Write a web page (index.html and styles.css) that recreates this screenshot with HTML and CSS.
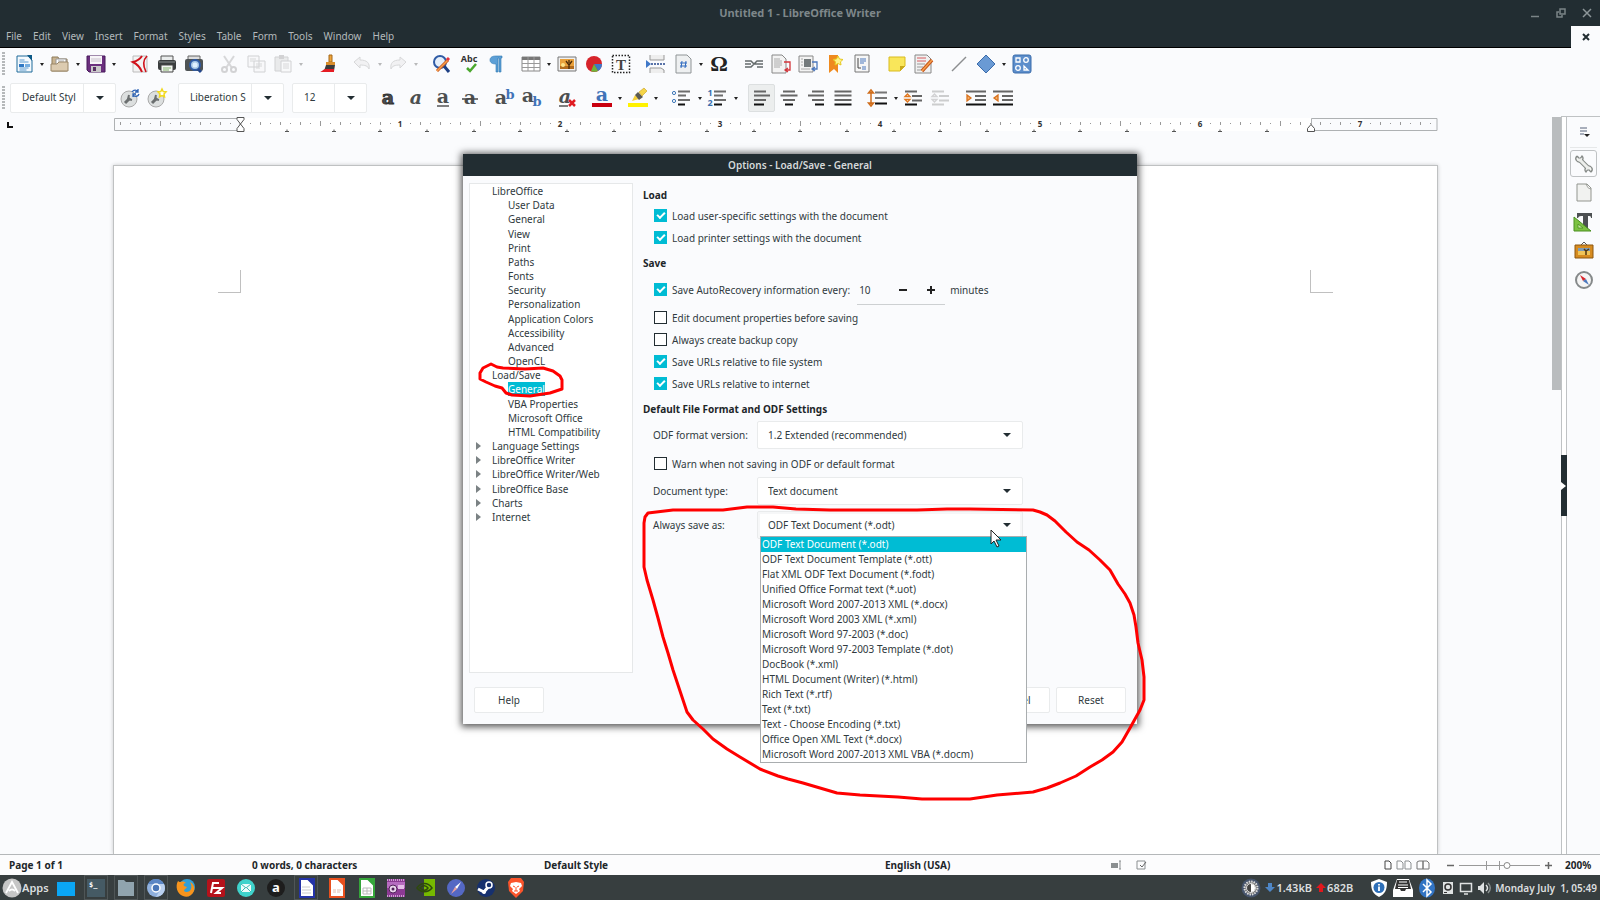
FILE: index.html
```html
<!DOCTYPE html>
<html lang="en">
<head>
  <meta charset="UTF-8" />
  <meta name="viewport" content="width=device-width, initial-scale=1.0"/>
  <title>Untitled 1 - LibreOffice Writer</title>
  <link rel="stylesheet" href="styles.css">
</head>
<body>
  <header class="titlebar">
    <h1>Untitled 1 - LibreOffice Writer</h1>
    <div class="window-buttons">
      <button aria-label="Minimize"><svg viewBox="0 0 10 10"><path d="M1 8.500h8" stroke="#7b8487" stroke-width="1.500"/></svg></button>
      <button aria-label="Restore"><svg viewBox="0 0 10 10"><path d="M4 1h5v5H4zM3 4H1v5h5V7" fill="none" stroke="#7b8487" stroke-width="1.500"/></svg></button>
      <button aria-label="Close"><svg viewBox="0 0 10 10"><path d="M1 1l8 8M9 1l-8 8" stroke="#8d9699" stroke-width="1.500"/></svg></button>
    </div>
  </header>

  <nav class="menubar">
    <a href="#">File</a>
    <a href="#">Edit</a>
    <a href="#">View</a>
    <a href="#">Insert</a>
    <a href="#">Format</a>
    <a href="#">Styles</a>
    <a href="#">Table</a>
    <a href="#">Form</a>
    <a href="#">Tools</a>
    <a href="#">Window</a>
    <a href="#">Help</a>
    <button class="close-doc" aria-label="Close document"><svg viewBox="0 0 8 8"><path d="M1 1l6 6M7 1l-6 6" stroke="#222d32" stroke-width="2"/></svg></button>
  </nav>

  <!-- standard toolbar -->
  <div class="toolbar standard">
    <span class="grip"></span>
    <div class="group">
      <button class="tool" aria-label="New"><svg viewBox="0 0 20 20"><path d="M3 2h11l4 4v12H3z" fill="#f4f9fd" stroke="#1f6a9a"/><path d="M13 1h5v6z" fill="#0e5a87"/><path d="M5.500 6h5M5.500 8h9M5.500 14h9M5.500 16h7" stroke="#5a9bd0"/><path d="M5 10h5v3H5z" fill="#2f78c4"/><path d="M11 10h5v3h-5z" fill="#76aee0"/></svg></button>
      <button class="drop" aria-label="New options"></button>
      <button class="tool" aria-label="Open"><svg viewBox="0 0 20 20"><path d="M2 17V3h6l1 2h8v12z" fill="#c9b491" stroke="#8d7a5b"/><path d="M6 5h10v7H6z" fill="#fff" stroke="#999"/><path d="M8 7h6M8 9h6" stroke="#aaa"/><path d="M1 17V10h6l2-2h9v9z" fill="#dccbb0" stroke="#9a8768"/></svg></button>
      <button class="drop" aria-label="Open options"></button>
      <button class="tool" aria-label="Save"><svg viewBox="0 0 20 20"><path d="M1 2h18v16H3l-2-2z" fill="#6b2f7e" stroke="#46195a"/><path d="M4 2h12v8H4z" fill="#f7f5f8"/><path d="M5 5h10M5 7h10" stroke="#c8c0cc"/><path d="M5 12h10v6H5z" fill="#c9c9c9"/><path d="M7 13h3v4H7z" fill="#573063"/></svg></button>
      <button class="drop" aria-label="Save options"></button>
    </div>
    <div class="group">
      <button class="tool" aria-label="Export as PDF"><svg viewBox="0 0 20 20"><path d="M3 2h14v16H3z" fill="#f3f3f3" stroke="#bbb"/><path d="M12 2c-2 3-5 5-9 6 4 2 7 5 9 10" fill="none" stroke="#d0121b" stroke-width="2"/><path d="M17 2c-4 4-4 10-1 16" fill="none" stroke="#d0121b" stroke-width="1.600"/></svg></button>
      <button class="tool" aria-label="Print"><svg viewBox="0 0 20 20"><path d="M4 2h12v6H4z" fill="#e9ecec" stroke="#555"/><rect x="1" y="6" width="18" height="10" rx="2" fill="#3b3e3f"/><path d="M2 8h16" stroke="#8b9091"/><path d="M4 11h12v7H4z" fill="#f4f6f3" stroke="#444"/><path d="M6 14h8M6 16h6" stroke="#83b26d"/></svg></button>
      <button class="tool" aria-label="Print Preview"><svg viewBox="0 0 20 20"><path d="M4 2h12v5H4z" fill="#ddd" stroke="#666"/><rect x="1" y="5" width="18" height="12" rx="2" fill="#4e5355"/><circle cx="11" cy="11" r="5" fill="#a9c8e6" stroke="#2f5ba5" stroke-width="2"/><circle cx="11" cy="11" r="2.500" fill="#dff0ff"/><path d="M14 15l3 3" stroke="#24478c" stroke-width="3"/></svg></button>
    </div>
    <div class="group">
      <button class="tool off" aria-label="Cut" disabled><svg viewBox="0 0 20 20"><path d="M5 2l8 12M15 2L7 14" stroke="#888" stroke-width="2"/><circle cx="5.500" cy="15.500" r="2.500" fill="none" stroke="#777" stroke-width="2"/><circle cx="14.500" cy="15.500" r="2.500" fill="none" stroke="#777" stroke-width="2"/></svg></button>
      <button class="tool off" aria-label="Copy" disabled><svg viewBox="0 0 20 20"><path d="M2 2h11v11H2zM8 7h11v11H8z" fill="#f4f4f4" stroke="#777"/><path d="M4 5h6M4 7h4M10 10h6M10 12h6M10 14h4" stroke="#888"/></svg></button>
      <button class="tool off" aria-label="Paste" disabled><svg viewBox="0 0 20 20"><path d="M2 3h13v14H2z" fill="#c5c5c5" stroke="#777"/><path d="M6 1h5v4H6z" fill="#777"/><path d="M8 7h10v11H8z" fill="#f5f5f5" stroke="#777"/><path d="M10 10h6M10 12h6M10 14h6" stroke="#888"/></svg></button>
      <button class="drop off" aria-label="Paste options" disabled></button>
    </div>
    <div class="group">
      <button class="tool" aria-label="Clone Formatting"><svg viewBox="0 0 20 20"><path d="M12 1h3v7h-3z" fill="#f0a53b" stroke="#a4681b"/><path d="M9 8h9v3H9z" fill="#d98d2b"/><path d="M9 11h9l-1 6H7z" fill="#3c3c3c"/><path d="M2 18c3 0 3-2 6-3h9v3z" fill="#e51c23"/></svg></button>
    </div>
    <div class="group">
      <button class="tool off" aria-label="Undo" disabled><svg viewBox="0 0 20 20"><path d="M2 8l6-5v3c7 0 10 3 9 9-1-3-4-4-9-4v3z" fill="#ddd" stroke="#888"/></svg></button>
      <button class="drop off" aria-label="Undo options" disabled></button>
      <button class="tool off" aria-label="Redo" disabled><svg viewBox="0 0 20 20"><path d="M18 8l-6-5v3c-7 0-10 3-9 9 1-3 4-4 9-4v3z" fill="#ddd" stroke="#888"/></svg></button>
      <button class="drop off" aria-label="Redo options" disabled></button>
    </div>
    <div class="group">
      <button class="tool" aria-label="Find and Replace"><svg viewBox="0 0 20 20"><circle cx="8" cy="8" r="6" fill="#e4eefa" stroke="#2f5ba5" stroke-width="2"/><path d="M12 12l5 6" stroke="#1d3f84" stroke-width="3"/><path d="M5 17L16 6" stroke="#c6551c" stroke-width="3"/><path d="M5 17L16 6" stroke="#f7a04c" stroke-width="1.500"/><path d="M15 6l2-2" stroke="#e6323c" stroke-width="3"/></svg></button>
      <button class="tool" aria-label="Spelling"><svg viewBox="0 0 20 20"><text x="10" y="8" class="abc" text-anchor="middle">Abc</text><path d="M8 14l3 3 6-7" fill="none" stroke="#4ba82e" stroke-width="2.500"/></svg></button>
      <button class="tool" aria-label="Formatting Marks"><svg viewBox="0 0 20 20"><path d="M16 2v2h-1v14h-2V4h-1v14h-2v-8C6 10 4 8.500 4 6s2-4 6-4z" fill="#5c9fd6" stroke="#2f78b4" stroke-width=".6"/></svg></button>
    </div>
    <div class="group">
      <button class="tool" aria-label="Insert Table"><svg viewBox="0 0 20 20"><path d="M1 3h18v14H1z" fill="#fff" stroke="#888"/><path d="M1 3h18v3H1z" fill="#777"/><path d="M1 9.500h18M1 13.500h18M7 3v14M13 3v14" stroke="#999"/></svg></button>
      <button class="drop" aria-label="Table options"></button>
      <button class="tool" aria-label="Insert Image"><svg viewBox="0 0 20 20"><path d="M1 3h18v14H1z" fill="#f0f0f0" stroke="#777"/><path d="M3 5h14v10H3z" fill="#e9a13b"/><path d="M3 12h14v3H3z" fill="#b36c1c"/><circle cx="6" cy="11" r="2" fill="#fde48a"/><path d="M12 15v-4L9 7M12 11l3-4M12 9V6" stroke="#4a2a08" fill="none" stroke-width="1.300"/></svg></button>
      <button class="tool" aria-label="Insert Chart"><svg viewBox="0 0 20 20"><circle cx="10" cy="10" r="8" fill="#d6242b"/><path d="M10 10h8a8 8 0 0 1-4 7z" fill="#3f78c8"/><path d="M10 10l4 7a8 8 0 0 1-7 0z" fill="#6fb53b"/></svg></button>
      <button class="tool" aria-label="Insert Text Box"><svg viewBox="0 0 20 20"><path d="M1.500 1.500h17v17h-17z" fill="none" stroke="#222" stroke-width="1.500" stroke-dasharray="1.500 1.500"/><text x="10" y="15.500" class="glyph-t" text-anchor="middle">T</text></svg></button>
    </div>
    <div class="group">
      <button class="tool" aria-label="Page Break"><svg viewBox="0 0 20 20"><path d="M4 1v5h14V1M4 19v-5h11l3 2v3" fill="#eee" stroke="#999"/><path d="M5 10h15" stroke="#24478c" stroke-width="1.500" stroke-dasharray="2 1"/><path d="M0 6l5 4-5 4z" fill="#3f78c8"/></svg></button>
      <button class="tool" aria-label="Insert Field"><svg viewBox="0 0 20 20"><path d="M3 1h11l4 4v14H3z" fill="#eef0f1" stroke="#8f9496"/><path d="M9 7L8 14M13 7l-1 7M7 9h7M7 12h7" stroke="#2f6ac0"/></svg></button>
      <button class="drop" aria-label="Field options"></button>
      <button class="tool" aria-label="Special Character"><svg viewBox="0 0 20 20"><text x="10" y="17" class="omega" text-anchor="middle">Ω</text></svg></button>
    </div>
    <div class="group">
      <button class="tool" aria-label="Hyperlink"><svg viewBox="0 0 20 20"><path d="M1 7h6l3 3h9M1 13h6l3-3 3-3h6M1 10h6M13 13h6" fill="none" stroke="#646b6c" stroke-width="1.500"/></svg></button>
      <button class="tool" aria-label="Footnote"><svg viewBox="0 0 20 20"><path d="M1 1h10l4 4v14H1z" fill="#f3f3f3" stroke="#888"/><path d="M3 5h6M3 7h8M3 9h8M3 11h8M3 13h6" stroke="#aaa"/><path d="M13 8h6v8h-4m2-2l-3 2 3 2" fill="none" stroke="#d3343a" stroke-width="1.300"/></svg></button>
      <button class="tool" aria-label="Endnote"><svg viewBox="0 0 20 20"><path d="M1 2h14v16H1z" fill="#f3f3f3" stroke="#888"/><path d="M6 5h7v8H6z" fill="#747a7c"/><path d="M3 5h2M3 8h2M3 11h2M3 15h9" stroke="#aaa"/><path d="M14 8h5v7h-4m2-2l-3 2 3 2" fill="none" stroke="#4c78bd" stroke-width="1.300"/></svg></button>
      <button class="tool" aria-label="Bookmark"><svg viewBox="0 0 20 20"><path d="M4 1h9v18l-4-4-5 4z" fill="#ef8a1e"/><path d="M13 2l1.500 3 3.500.5-2.500 2.300.5 3.200-3-1.500-3 1.500.5-3.200L8 5.500l3.500-.5z" fill="#fff38a" stroke="#e6c81e"/></svg></button>
      <button class="tool" aria-label="Cross-reference"><svg viewBox="0 0 20 20"><path d="M3 1h14v17H3z" fill="#f6f6f6" stroke="#777"/><path d="M8 5h6M8 7h6M8 9h4M10 13h4M10 15h4" stroke="#4c78bd"/><path d="M6 4v10h3" stroke="#444" fill="none"/></svg></button>
    </div>
    <div class="group">
      <button class="tool" aria-label="Comment"><svg viewBox="0 0 20 20"><path d="M2 3h16v9l-5 5H2z" fill="#f9e65a" stroke="#d9bb1e"/><path d="M18 12h-5v5z" fill="#c9a81b"/></svg></button>
      <button class="tool" aria-label="Track Changes"><svg viewBox="0 0 20 20"><path d="M1 1h12l4 4v14H1z" fill="#f1f1f1" stroke="#888"/><path d="M3 4h9M3 7h9" stroke="#d65a5e"/><path d="M3 10h8M3 13h6M3 16h8" stroke="#999"/><path d="M8 17L18 6" stroke="#c6551c" stroke-width="3.500"/><path d="M8 17L18 6" stroke="#f7a04c" stroke-width="1.500"/></svg></button>
    </div>
    <div class="group">
      <button class="tool" aria-label="Line"><svg viewBox="0 0 20 20"><path d="M3 17L17 3" stroke="#8b8e90" stroke-width="1.500"/></svg></button>
      <button class="tool" aria-label="Shapes"><svg viewBox="0 0 20 20"><path d="M10 1l9 9-9 9-9-9z" fill="#6a9ad4" stroke="#3b6cab"/></svg></button>
      <button class="drop" aria-label="Shape options"></button>
      <button class="tool" aria-label="Draw Functions"><svg viewBox="0 0 20 20"><rect x="1" y="1" width="18" height="18" rx="2" fill="#5d8ecb" stroke="#3b6cab"/><path d="M4 4h4v4H4zM12 16v-4l4 4z" fill="none" stroke="#fff" stroke-width="1.300"/><circle cx="14" cy="6" r="2.300" fill="none" stroke="#fff" stroke-width="1.300"/><circle cx="6" cy="14" r="2.300" fill="none" stroke="#fff" stroke-width="1.300"/></svg></button>
    </div>
  </div>

  <!-- formatting toolbar -->
  <div class="toolbar formatting">
    <span class="grip"></span>
    <div class="group">
      <div class="combo"><input type="text" value="Default Styl" aria-label="Paragraph style"><button aria-label="Show styles"></button></div>
      <button class="tool" aria-label="Update Style"><svg viewBox="0 0 20 20"><circle cx="9" cy="11" r="8" fill="#dcdfdf" stroke="#aaa"/><path d="M5 15l5-5" stroke="#6b6f70" stroke-width="3"/><path d="M9 7l-1 4 4 1" fill="none" stroke="#6b6f70" stroke-width="2"/><path d="M12 4c2-3 5-2 6 0M19 6c-1 3-4 3-6 1M18 1v3h-3M13 9V6h3" fill="none" stroke="#2f64b5" stroke-width="1.300"/></svg></button>
      <button class="tool" aria-label="New Style"><svg viewBox="0 0 20 20"><circle cx="9" cy="11" r="8" fill="#dcdfdf" stroke="#aaa"/><path d="M5 15l5-5" stroke="#6b6f70" stroke-width="3"/><path d="M9 7l-1 4 4 1" fill="none" stroke="#6b6f70" stroke-width="2"/><path d="M15 1l1.200 2.500 2.800.4-2 2 .5 3L15 7.600l-2.500 1.300.5-3-2-2 2.800-.4z" fill="#fff" stroke="#f1d81e" stroke-width="1.500"/></svg></button>
    </div>
    <div class="combo"><input type="text" value="Liberation S" aria-label="Font name"><button aria-label="Show fonts"></button></div>
    <div class="combo size"><input type="text" value="12" aria-label="Font size"><button aria-label="Show sizes"></button></div>
    <div class="group">
      <button class="tool" aria-label="Bold"><svg viewBox="0 0 20 20"><text x="9" y="16" class="letter heavy" text-anchor="middle">a</text></svg></button>
      <button class="tool" aria-label="Italic"><svg viewBox="0 0 20 20"><text x="10" y="16" class="letter slanted" text-anchor="middle">a</text></svg></button>
      <button class="tool" aria-label="Underline"><svg viewBox="0 0 20 20"><text x="10" y="15" class="letter" text-anchor="middle">a</text><path d="M4 18h12" stroke="#555" stroke-width="1.500"/></svg></button>
      <button class="tool" aria-label="Strikethrough"><svg viewBox="0 0 20 20"><text x="10" y="16" class="letter" text-anchor="middle">a</text><path d="M2 11h16" stroke="#444" stroke-width="1.500"/></svg></button>
    </div>
    <div class="group">
      <button class="tool" aria-label="Superscript"><svg viewBox="0 0 20 20"><text x="6" y="16" class="letter" text-anchor="middle">a</text><text x="15" y="11" class="letter small" text-anchor="middle">b</text></svg></button>
      <button class="tool" aria-label="Subscript"><svg viewBox="0 0 20 20"><text x="6" y="14" class="letter" text-anchor="middle">a</text><text x="15" y="18" class="letter small" text-anchor="middle">b</text></svg></button>
    </div>
    <div class="group">
      <button class="tool" aria-label="Clear Formatting"><svg viewBox="0 0 20 20"><text x="8" y="15" class="letter slanted" text-anchor="middle">a</text><path d="M2 18h9" stroke="#555" stroke-width="1.500"/><path d="M12 12l6 6M18 12l-6 6" stroke="#e01b22" stroke-width="2.500"/></svg></button>
    </div>
    <div class="group">
      <button class="tool" aria-label="Font Color"><svg viewBox="0 0 20 20"><text x="10" y="13" class="letter blue" text-anchor="middle">a</text><path d="M0 15h20v4H0z" fill="#c9000f"/></svg></button>
      <button class="drop" aria-label="Font color options"></button>
      <button class="tool" aria-label="Highlighting"><svg viewBox="0 0 20 20"><path d="M0 15h20v4H0z" fill="#fff200"/><path d="M4 13l3-6 4 4z" fill="#f3cf3a"/><path d="M7 7l3-3 5 5-4 3z" fill="#5a5a52"/><path d="M11 4l5-4 3 3-5 5z" fill="#f5d548" stroke="#c79d1e" stroke-width=".6"/></svg></button>
      <button class="drop" aria-label="Highlight options"></button>
    </div>
    <div class="group">
      <button class="tool" aria-label="Bullets"><svg viewBox="0 0 20 20"><circle cx="2" cy="5" r="1.600" fill="none" stroke="#3f78b8"/><circle cx="2" cy="13" r="1.600" fill="none" stroke="#3f78b8"/><path d="M6 3.500h12M6 7.500h8M6 12h12" stroke="#6c6c6c" stroke-width="2"/><path d="M6 16.500h7" stroke="#111" stroke-width="2"/></svg></button>
      <button class="drop" aria-label="Bullet options"></button>
      <button class="tool" aria-label="Numbering"><svg viewBox="0 0 20 20"><text x="2" y="8" class="num" text-anchor="middle">1</text><text x="2" y="18" class="num" text-anchor="middle">2</text><path d="M6 3.500h12M6 7.500h9M6 12h12" stroke="#6c6c6c" stroke-width="2"/><path d="M6 16.500h8" stroke="#111" stroke-width="2"/></svg></button>
      <button class="drop" aria-label="Numbering options"></button>
    </div>
    <div class="group">
      <button class="tool pressed" aria-label="Align Left"><svg viewBox="0 0 20 20"><path d="M2 3.500h12M2 7.500h16M2 12h12" stroke="#666" stroke-width="2"/><path d="M2 16.500h10" stroke="#111" stroke-width="2"/></svg></button>
      <button class="tool" aria-label="Center"><svg viewBox="0 0 20 20"><path d="M4 3.500h12M1.500 7.500h17M4 12h12" stroke="#666" stroke-width="2"/><path d="M6 16.500h8" stroke="#111" stroke-width="2"/></svg></button>
      <button class="tool" aria-label="Align Right"><svg viewBox="0 0 20 20"><path d="M6 3.500h12M2 7.500h16M6 12h12" stroke="#666" stroke-width="2"/><path d="M9 16.500h9" stroke="#111" stroke-width="2"/></svg></button>
      <button class="tool" aria-label="Justify"><svg viewBox="0 0 20 20"><path d="M1.500 3.500h17M1.500 7.500h17M1.500 12h17" stroke="#666" stroke-width="2"/><path d="M1.500 16.500h17" stroke="#111" stroke-width="2"/></svg></button>
    </div>
    <div class="group">
      <button class="tool" aria-label="Line Spacing"><svg viewBox="0 0 20 20"><path d="M3 4v12M.5 5L3 2l2.500 3zM.5 15L3 18l2.500-3z" fill="#f7b26a" stroke="#cf6d1c" stroke-width="1.500"/><path d="M7 4.500h12M7 10h12" stroke="#777" stroke-width="2"/><path d="M7 15.500h12" stroke="#111" stroke-width="2"/></svg></button>
      <button class="drop" aria-label="Line spacing options"></button>
      <button class="tool" aria-label="Increase Spacing"><svg viewBox="0 0 20 20"><path d="M1 3.500h12M8 8h10M8 12.500h10" stroke="#666" stroke-width="2"/><path d="M1 16.500h12" stroke="#111" stroke-width="2"/><path d="M1 8.500L3.500 6 6 8.500zM1 11.500L3.500 14 6 11.500z" fill="#fff" stroke="#e07820" stroke-width="1.300"/></svg></button>
      <button class="tool off" aria-label="Decrease Spacing" disabled><svg viewBox="0 0 20 20"><path d="M1 3.500h12M8 8h10M8 12.500h10M1 16.500h12" stroke="#666" stroke-width="2"/><path d="M1 8.500L3.500 6 6 8.500zM1 11.500L3.500 14 6 11.500z" fill="#fff" stroke="#777" stroke-width="1.300"/></svg></button>
    </div>
    <div class="group">
      <button class="tool" aria-label="Increase Indent"><svg viewBox="0 0 20 20"><path d="M0 3.500h20M9 8h11M9 12h11" stroke="#666" stroke-width="2"/><path d="M0 16.500h20" stroke="#111" stroke-width="2"/><path d="M1 7l4 3-4 3z" fill="#f7b26a" stroke="#d8701b" stroke-width="1.300"/></svg></button>
      <button class="tool" aria-label="Decrease Indent"><svg viewBox="0 0 20 20"><path d="M0 3.500h20M9 8h11M9 12h11" stroke="#666" stroke-width="2"/><path d="M0 16.500h20" stroke="#111" stroke-width="2"/><path d="M5 7l-4 3 4 3z" fill="#f7b26a" stroke="#d8701b" stroke-width="1.300"/></svg></button>
    </div>
  </div>

  <main class="workspace">
    <section class="document">
      <div class="ruler">
        <svg class="tab-kind" viewBox="0 0 6 6"><path d="M1 0v5h5" fill="none" stroke="#111" stroke-width="2"/></svg>
        <svg class="scale" viewBox="114 117 1324 16">
          <defs>
            <!-- 160px to the inch, a tick every 10px -->
            <pattern id="ticks" x="240" y="117" width="20" height="16" patternUnits="userSpaceOnUse">
              <path d="M.5 5v3" stroke="#999"/><path d="M10.500 6v1" stroke="#999"/>
            </pattern>
            <pattern id="halves" x="320" y="117" width="160" height="16" patternUnits="userSpaceOnUse">
              <path d="M.5 4v5" stroke="#999"/>
            </pattern>
          </defs>
          <path d="M240 118h1071v13H240z" fill="#fff"/>
          <path d="M114.500 118.500H240v12H114.500zM1311.500 118.500H1437v12h-125.500z" fill="#fafbfd" stroke="#aeb1b3"/>
          <path d="M116 117h1318v16H116z" fill="url(#ticks)"/>
          <path d="M150 117h1280v16H150z" fill="url(#halves)"/>
          <g id="tabs" stroke="#555"></g>
          <g id="inches" class="inch" text-anchor="middle"></g>
          <path d="M237 117.500h7v2l-3.500 4.500 3.500 4.500v3h-7v-3l3.500-4.500-3.500-4.500zM1307.500 131.500v-3l3.500-4 3.500 4v3z" fill="#fff" stroke="#555"/>
        </svg>
      </div>
      <div class="page">
        <span class="corner left"></span>
        <span class="corner right"></span>
      </div>
    </section>
    <div class="scrollbar"></div>
    <div class="splitter"><button aria-label="Hide sidebar"><svg viewBox="0 0 5 8"><path d="M0 0l5 4-5 4z" fill="#fff"/></svg></button></div>
    <aside class="sidebar">
      <button class="deck settings" aria-label="Sidebar Settings"><svg viewBox="0 0 20 20"><path d="M6 6h7M6 9h7M6 12h4" stroke="#56637a"/><path d="M10 12h6l-3 3z" fill="#222"/></svg></button>
      <button class="deck active" aria-label="Properties"><svg viewBox="0 0 20 20"><path d="M5 5l10 10" stroke="#858a87" stroke-width="5"/><path d="M3 2c-3 3 0 7 4 6M3 2l3 3 2-3c2 2 1 4-1 6M17 18c3-3 0-7-4-6M17 18l-3-3-2 3c-2-2-1-4 1-6" fill="#f4f5f3" stroke="#858a87" stroke-width="1.300"/><path d="M5 5l10 10" stroke="#eceeeb" stroke-width="3"/></svg></button>
      <button class="deck" aria-label="Page"><svg viewBox="0 0 20 20"><path d="M3 1h10l4 4v13H3z" fill="#f1f2f0" stroke="#92958f"/><path d="M12 1c2 3 1 4 5 5" fill="#fff" stroke="#92958f"/></svg></button>
      <button class="deck" aria-label="Styles"><svg viewBox="0 0 20 20"><path d="M3 1h15v5h-1c0-2-1-2-3-2v13H9V4C6 4 5 4 4 6H3z" fill="#4c5052"/><path d="M0 5l17 14H0z" fill="#7cc243" stroke="#4a8f20"/><path d="M4 12l5 4H4z" fill="#c5e8a5" stroke="#4a8f20" stroke-width=".8"/></svg></button>
      <button class="deck" aria-label="Gallery"><svg viewBox="0 0 20 20"><path d="M7 4l3-3 3 3" fill="none" stroke="#555"/><path d="M1 4h18v13H1z" fill="#d68b1f" stroke="#8c5610"/><path d="M4 7h12v7H4z" fill="#7f9bb5"/><path d="M4 10h12v4H4z" fill="#f0c458"/><path d="M12 14v-4l-2-2M12 10l3-2" fill="none" stroke="#4f3510" stroke-width="1.500"/></svg></button>
      <button class="deck" aria-label="Navigator"><svg viewBox="0 0 20 20"><circle cx="10" cy="10" r="8" fill="#f5f5f5" stroke="#85898a" stroke-width="2"/><path d="M6 5l6 4-3 2z" fill="#d9252b"/><path d="M9 11l3-2 3 6z" fill="#4b78bd"/></svg></button>
    </aside>
  </main>

  <footer class="statusbar">
    <span>Page 1 of 1</span>
    <span>0 words, 0 characters</span>
    <span>Default Style</span>
    <span>English (USA)</span>
    <svg class="mode" viewBox="0 0 36 10"><path d="M0 3h7v5H0z" fill="#8b8f91"/><path d="M9 1v8M8 1h2M8 9h2M26 1h8v8h-8z" fill="none" stroke="#8b8f91"/><path d="M29 5l2 2 4-5" fill="none" stroke="#666"/></svg>
    <svg class="views" viewBox="0 0 46 10"><path d="M1 1h4l2 2v6H1z" fill="none" stroke="#444"/><path d="M13 1h4l2 2v6h-6zM21 1h4l2 2v6h-6z" fill="none" stroke="#8b8f91"/><path d="M33 2l2-1h4v8h-6zM39 1h4l2 2v6h-6z" fill="none" stroke="#777"/></svg>
    <svg class="zoom" viewBox="0 0 106 10"><path d="M0 5.500h7M98 5.500h7M101.500 2v7" stroke="#666" stroke-width="1.500"/><path d="M12 5.500h81M39.500 1v9M52.500 1v9" stroke="#999"/><circle cx="60" cy="5.500" r="3" fill="#fff" stroke="#888"/></svg>
    <span>200%</span>
  </footer>

  <nav class="taskbar">
    <button class="apps"><svg viewBox="0 0 20 20"><circle cx="10" cy="10" r="9.500" fill="#c6c6c6"/><path d="M4 15l6-11 6 11M7 13c2-2 4-2 6 0" fill="none" stroke="#fff" stroke-width="1.800"/></svg>Apps</button>
    <button class="task" aria-label="Show desktop"><svg viewBox="0 0 20 20"><path d="M1 2h18v16H1z" fill="#0aa6f5"/><path d="M1 2h18v2H1z" fill="#2c4250"/></svg></button>
    <button class="task open" aria-label="Terminal"><svg viewBox="0 0 20 20"><path d="M1 1h18v18H1z" fill="#455a64"/><text x="3" y="9" class="prompt">$_</text></svg></button>
    <button class="task open" aria-label="Files"><svg viewBox="0 0 20 20"><path d="M2 2h6l2 2h8v14H2z" fill="#90a4ae"/></svg></button>
    <button class="task open" aria-label="Chromium"><svg viewBox="0 0 20 20"><circle cx="10" cy="10" r="9" fill="#8fb0dd"/><path d="M2 6a9 9 0 0 1 16 0h-8z" fill="#5b86c5"/><path d="M10 19a9 9 0 0 0 8-13h-6l2 6z" fill="#b9d0ef"/><circle cx="10" cy="10" r="4" fill="#4a76b8" stroke="#fff" stroke-width="1.500"/></svg></button>
    <button class="task" aria-label="Firefox"><svg viewBox="0 0 20 20"><circle cx="11" cy="9" r="8" fill="#2f9fd8"/><path d="M2 3c1 1 2 1 3 1 2-1 4 0 5 1-2 0-3 1-2 3l3 1c-1 2-3 2-3 4 2 2 6 1 7-2 1-3 0-5-1-7 4 2 5 6 4 9-2 5-7 7-11 5C1 16-1 8 2 3z" fill="#f7941d"/></svg></button>
    <button class="task" aria-label="FileZilla"><svg viewBox="0 0 20 20"><rect x="1" y="1" width="18" height="18" rx="2" fill="#b5121b"/><path d="M5 15L7 5h6M6 10h5M10 10h6l-6 5h5" fill="none" stroke="#fff" stroke-width="2"/></svg></button>
    <button class="task" aria-label="Mail"><svg viewBox="0 0 20 20"><circle cx="10" cy="10" r="9" fill="#3fd3cc"/><path d="M5 6h10v8H5z" fill="#eefcfb"/><path d="M5 6l5 4 5-4M5 14l4-4M15 14l-4-4" fill="none" stroke="#3fb8b2"/></svg></button>
    <button class="task" aria-label="Amazon"><svg viewBox="0 0 20 20"><circle cx="10" cy="10" r="9" fill="#1d1d1d"/><text x="10" y="14" class="amz" text-anchor="middle">a</text></svg></button>
    <button class="task open" aria-label="Writer"><svg viewBox="0 0 20 20"><path d="M4 1h8l6 6v12H4z" fill="#fff" stroke="#2433a8" stroke-width="2"/><path d="M11 0h8v8z" fill="#2433a8"/><path d="M6 9h8M6 12h9M6 15h9" stroke="#ccc"/></svg></button>
    <button class="task" aria-label="Impress"><svg viewBox="0 0 20 20"><path d="M4 1h8l6 6v12H4z" fill="#fff" stroke="#e8501e" stroke-width="2"/><path d="M11 0h8v8z" fill="#e8501e"/><path d="M7 12h3M7 14h3M11 12h4M11 14h3" stroke="#e0bfae"/></svg></button>
    <button class="task" aria-label="Calc"><svg viewBox="0 0 20 20"><path d="M4 1h8l6 6v12H4z" fill="#fff" stroke="#35a53a" stroke-width="2"/><path d="M11 0h8v8z" fill="#35a53a"/><path d="M7 10h8v6H7zM7 13h8M11 10v6" fill="none" stroke="#bbb"/></svg></button>
    <button class="task" aria-label="Video"><svg viewBox="0 0 20 20"><path d="M1 1h18v18H1z" fill="#8c3a94"/><path d="M1 2h18M1 18h18" stroke="#e2bfe6" stroke-width="1.500" stroke-dasharray="1 1"/><path d="M1 4h18v6H1z" fill="#b66cc0"/><circle cx="7" cy="11" r="4" fill="#e8d4ea" stroke="#51205a"/><circle cx="7" cy="11" r="1.500" fill="#51205a"/><path d="M12 7h6v4h-6z" fill="#e4bfe8"/></svg></button>
    <button class="task" aria-label="Nvidia"><svg viewBox="0 0 20 20"><path d="M8 1h11v17H8z" fill="#76b900"/><path d="M1 10c4-6 11-6 15 0-4 5-11 5-15 0zM4 10c3-3 6-3 8 0-2 3-5 3-8 0z" fill="none" stroke="#2f4a0c" stroke-width="1.500"/></svg></button>
    <button class="task" aria-label="Web browser"><svg viewBox="0 0 20 20"><circle cx="10" cy="10" r="9" fill="#5468c4"/><path d="M15 4l-4 7-2-2z" fill="#fff"/><path d="M5 16l4-7 2 2z" fill="#e6a0a0"/></svg></button>
    <button class="task" aria-label="Steam"><svg viewBox="0 0 20 20"><circle cx="10" cy="10" r="9" fill="#16306e"/><path d="M2 11l6 3 5-6" fill="none" stroke="#fff" stroke-width="3"/><circle cx="13" cy="7" r="3" fill="#16306e" stroke="#fff" stroke-width="1.500"/><circle cx="8" cy="14" r="2" fill="#fff"/></svg></button>
    <button class="task" aria-label="Brave"><svg viewBox="0 0 20 20"><path d="M5 0h10l3 4-1 9-7 7-7-7-1-9z" fill="#fb542b"/><path d="M10 4l5 1 1 3-3 3 1 2-4 3-4-3 1-2-3-3 1-3z" fill="#fff"/><path d="M7 8l2 1M13 8l-2 1M10 9v4M8 13h4" stroke="#fb542b"/></svg></button>

    <div class="tray">
      <svg class="gear" viewBox="0 0 20 20"><circle cx="10" cy="10" r="9.500" fill="#46546c"/><circle cx="10" cy="10" r="6.500" fill="#777" stroke="#ddd" stroke-width="2" stroke-dasharray="1.500 1"/><circle cx="10" cy="10" r="4.500" fill="#444" stroke="#ddd"/><path d="M10 6a4 4 0 0 1 0 8z" fill="#fff"/></svg>
      <span class="net"><svg viewBox="0 0 10 10"><path d="M3 0h4v4h3L5 9 0 4h3z" fill="#4e86c6"/></svg>1.43kB</span>
      <span class="net"><svg viewBox="0 0 10 10"><path d="M3 9h4V5h3L5 0 0 5h3z" fill="#e0181e"/></svg>682B</span>
      <svg class="shield" viewBox="0 0 20 20"><path d="M10 1l8 3c0 8-2 12-8 15C4 16 2 12 2 4z" fill="#fff"/><circle cx="10" cy="9.500" r="5.500" fill="#2e6fb8"/><path d="M10 6v1.500M10 8.500v4.500" stroke="#fff" stroke-width="1.800"/></svg>
      <svg class="inbox" viewBox="0 0 20 20"><path d="M4 1h12l4 11v7H0v-7z" fill="#fff"/><path d="M4 2h12l2 9h-5l-1 2H8l-1-2H2z" fill="#333"/><path d="M6 4h8M5 7h10M5 9.500h10" stroke="#fff"/></svg>
      <svg class="bt" viewBox="0 0 20 20"><ellipse cx="10" cy="10" rx="8" ry="9.500" fill="#3274c4"/><path d="M6 6l8 8-4 4V2l4 4-8 8" fill="none" stroke="#fff" stroke-width="1.500"/></svg>
      <svg class="small" viewBox="0 0 14 14"><path d="M2 1h10v12H2z" fill="#dfe2e2"/><circle cx="7" cy="6" r="3" fill="#dfe2e2" stroke="#333" stroke-width="1.500"/><path d="M3 11.500h3" stroke="#333"/></svg>
      <svg class="small" viewBox="0 0 14 14"><path d="M1.500 2.500h11v8h-11zM5 13h4" fill="none" stroke="#dfe2e2" stroke-width="1.500"/></svg>
      <svg class="small" viewBox="0 0 14 14"><path d="M1 5h2l4-4v12L3 9H1z" fill="#dfe2e2"/><path d="M9 4c2 2 2 4 0 6" fill="none" stroke="#dfe2e2" stroke-width="1.500"/><path d="M11 2c3 3 3 7 0 10" fill="none" stroke="#89908f" stroke-width="1.500"/></svg>
      <time>Monday July  1, 05:49</time>
    </div>
  </nav>

  <div class="dialog-layer">
    <div class="dialog" role="dialog" aria-labelledby="dialog-title">
      <h2 id="dialog-title">Options - Load/Save - General</h2>
      <div class="dialog-main">
        <ul class="tree">
          <li>LibreOffice</li>
          <li class="child">User Data</li>
          <li class="child">General</li>
          <li class="child">View</li>
          <li class="child">Print</li>
          <li class="child">Paths</li>
          <li class="child">Fonts</li>
          <li class="child">Security</li>
          <li class="child">Personalization</li>
          <li class="child">Application Colors</li>
          <li class="child">Accessibility</li>
          <li class="child">Advanced</li>
          <li class="child">OpenCL</li>
          <li>Load/Save</li>
          <li class="child"><span class="selected">General</span></li>
          <li class="child">VBA Properties</li>
          <li class="child">Microsoft Office</li>
          <li class="child">HTML Compatibility</li>
          <li class="closed">Language Settings</li>
          <li class="closed">LibreOffice Writer</li>
          <li class="closed">LibreOffice Writer/Web</li>
          <li class="closed">LibreOffice Base</li>
          <li class="closed">Charts</li>
          <li class="closed">Internet</li>
        </ul>

        <form class="settings-form">
          <h3>Load</h3>
          <label class="check"><input type="checkbox" checked>Load user-specific settings with the document</label>
          <label class="check"><input type="checkbox" checked>Load printer settings with the document</label>

          <h3>Save</h3>
          <div class="autosave">
            <label class="check"><input type="checkbox" checked>Save AutoRecovery information every:</label>
            <div class="spin">
              <input type="text" id="minutes" value="10">
              <button type="button" aria-label="Less"><svg viewBox="0 0 10 10"><path d="M1 5h8" stroke="#222" stroke-width="2"/></svg></button>
              <button type="button" aria-label="More"><svg viewBox="0 0 10 10"><path d="M1 5h8M5 1v8" stroke="#222" stroke-width="2"/></svg></button>
            </div>
            <label for="minutes">minutes</label>
          </div>
          <label class="check"><input type="checkbox">Edit document properties before saving</label>
          <label class="check"><input type="checkbox">Always create backup copy</label>
          <label class="check"><input type="checkbox" checked>Save URLs relative to file system</label>
          <label class="check"><input type="checkbox" checked>Save URLs relative to internet</label>

          <h3>Default File Format and ODF Settings</h3>
          <div class="field">
            <label for="odf-version">ODF format version:</label>
            <select id="odf-version"><option>1.2 Extended (recommended)</option></select>
          </div>
          <label class="check warn"><input type="checkbox">Warn when not saving in ODF or default format</label>
          <div class="field">
            <label for="doc-type">Document type:</label>
            <select id="doc-type"><option>Text document</option></select>
          </div>
          <div class="field save-as">
            <label for="save-format">Always save as:</label>
            <select id="save-format" class="focused"><option>ODF Text Document (*.odt)</option></select>
            <ul class="format-list" role="listbox">
              <li class="current">ODF Text Document (*.odt)</li>
              <li>ODF Text Document Template (*.ott)</li>
              <li>Flat XML ODF Text Document (*.fodt)</li>
              <li>Unified Office Format text (*.uot)</li>
              <li>Microsoft Word 2007-2013 XML (*.docx)</li>
              <li>Microsoft Word 2003 XML (*.xml)</li>
              <li>Microsoft Word 97-2003 (*.doc)</li>
              <li>Microsoft Word 97-2003 Template (*.dot)</li>
              <li>DocBook (*.xml)</li>
              <li>HTML Document (Writer) (*.html)</li>
              <li>Rich Text (*.rtf)</li>
              <li>Text (*.txt)</li>
              <li>Text - Choose Encoding (*.txt)</li>
              <li>Office Open XML Text (*.docx)</li>
              <li>Microsoft Word 2007-2013 XML VBA (*.docm)</li>
            </ul>
          </div>
        </form>
      </div>
      <div class="dialog-buttons">
        <button class="help">Help</button>
        <button>Cancel</button>
        <button>Reset</button>
      </div>

      <!-- red pen marks and the pointer -->
      <svg class="marks" viewBox="463 154 674 570">
        <path d="M491 364L497 367L503 368L525 369L543 368L553 371L560 376L562 380V389L550 393L530 396L512 395L506 393L502 388L495 386L486 382L480 379L480 373L483 368L487 366Z"/>
        <path d="M648 513L673 510L723 510L747 507H773L796 509L830 510H917L947 509H970L1033 510L1040 512L1047 515L1055 521L1066 532L1077 542L1089 550L1100 560L1110 570L1118 584L1125 594L1130 603L1134 615L1136 627L1138 643L1142 660L1144 677V700L1140 710L1130 728L1122 742L1113 752L1102 760L1090 767L1076 776L1060 783L1047 788L1033 792L997 795L970 799H922L898 797L860 795L837 793L820 788L803 783L788 779L778 776L760 769L740 757L727 749L713 739L703 729L693 720L687 712L680 691L673 670L668 653L663 637L658 618L653 600L647 580L644 567V523L645 517Z"/>
      </svg>
      <svg class="pointer" viewBox="0 0 12 19"><path d="M1 1v14l3-3 3 6 2-1-3-6h5z" fill="#fff" stroke="#222"/></svg>
    </div>
  </div>

  <script>
    const ns = "http://www.w3.org/2000/svg";
    const inches = document.getElementById("inches");
    for (let i = 1; i <= 7; i++) {
      const t = document.createElementNS(ns, "text");
      t.setAttribute("x", 240 + i * 160);
      t.setAttribute("y", 127);
      t.textContent = i;
      inches.appendChild(t);
    }

    // default tab stops
    const tabs = document.getElementById("tabs");
    for (let x = 287; x < 1300; x += 46.67) {
      const p = document.createElementNS(ns, "path");
      p.setAttribute("d", `M${Math.round(x) - 2} 131.5h4m-2 -2v2`);
      tabs.appendChild(p);
    }
  </script>
</body>
</html>
```

FILE: styles.css
```css
* {
  box-sizing: border-box;
}

body {
  display: flex;
  flex-direction: column;
  height: 100vh;
  margin: 0;
  overflow: hidden;
  background: #fafbfd;
  color: #303a3e;
  font-family: "Noto Sans", sans-serif;
  font-size: 10px;
  line-height: 14px;
}

button,
input,
select {
  font: inherit;
  color: inherit;
  border: 0;
  padding: 0;
  margin: 0;
  background: none;
}

ul {
  list-style: none;
  margin: 0;
  padding: 0;
}

svg {
  display: block;
  overflow: visible;
}

/* window frame */
.titlebar {
  position: relative;
  height: 26px;
  flex: none;
  display: flex;
  align-items: center;
  justify-content: center;
  background: #222d32;
}

.titlebar h1 {
  margin: 0;
  font-size: 11px;
  color: #7e878a;
}

.window-buttons {
  position: absolute;
  right: 8px;
  top: 8px;
  display: flex;
  gap: 16px;
}

.window-buttons svg {
  width: 10px;
  height: 10px;
}

.menubar {
  height: 22px;
  flex: none;
  display: flex;
  align-items: center;
  gap: 11px;
  padding-left: 6px;
  background: #222d32;
  border-bottom: 1px solid #000;
}

.menubar a {
  padding-bottom: 2px;
  color: #b4babc;
  text-decoration: none;
}

.close-doc {
  width: 29px;
  height: 23px;
  margin-left: auto;
  background: #fafbfd;
}

.close-doc svg {
  width: 8px;
  height: 8px;
  margin: auto;
}

/* toolbars */
.toolbar {
  flex: none;
  display: flex;
  align-items: center;
  gap: 8px;
}

.standard {
  height: 32px;
}

.formatting {
  height: 36px;
}

.group {
  display: flex;
  align-items: center;
}

.grip {
  width: 3px;
  height: 24px;
  margin: 0 -3px 0 2px;
  background: repeating-linear-gradient(#b5b8ba 0 2px, #fafbfd 2px 3px);
}

.tool {
  width: 27px;
  height: 28px;
  flex: none;
}

.tool svg {
  width: 20px;
  height: 20px;
  margin: auto;
}

.tool.pressed {
  background: #eceeee;
  border: 1px solid #dcdfe0;
  border-radius: 2px;
}

.drop {
  width: 9px;
  height: 28px;
  flex: none;
}

.drop::before {
  content: "";
  display: block;
  width: 0;
  margin: auto;
  border: 2px solid transparent;
  border-top: 3px solid #222;
  border-bottom: 0;
}

.off {
  opacity: 0.3;
}

.combo {
  width: 106px;
  height: 30px;
  display: flex;
  background: #fff;
  border: 1px solid #e9ebec;
  border-radius: 2px;
}

.combo input {
  flex: 1;
  min-width: 0;
  padding: 0 0 2px 11px;
  font-size: 10px;
}

.combo button {
  width: 32px;
  border-left: 1px solid #e9ebec;
}

.combo button::before {
  content: "";
  display: block;
  width: 0;
  margin: auto;
  border: 4px solid transparent;
  border-top-color: #222d32;
  border-bottom: 0;
}

.combo.size {
  width: 75px;
}

.abc {
  font: bold 9px "Noto Sans", sans-serif;
  fill: #333;
}

.glyph-t {
  font: bold 15px "Liberation Serif", serif;
  fill: #444;
}

.omega {
  font: bold 22px "Liberation Serif", serif;
  fill: #222;
}

.letter {
  font: bold 19px "DejaVu Serif", serif;
  fill: #4c4f50;
}

.letter.heavy {
  stroke: #333;
  stroke-width: 1;
}

.letter.slanted {
  font-style: italic;
}

.letter.small {
  font-size: 13px;
  fill: #4073b8;
}

.letter.blue {
  fill: #4073b8;
}

.num {
  font: bold 9px "Noto Sans", sans-serif;
  fill: #3a6fae;
}

/* document */
.workspace {
  flex: 1;
  min-height: 0;
  display: flex;
}

.document {
  flex: 1;
  min-width: 0;
  display: flex;
  flex-direction: column;
}

.ruler {
  height: 49px;
  flex: none;
  display: flex;
  align-items: flex-start;
  padding-top: 1px;
}

.tab-kind {
  width: 6px;
  height: 6px;
  margin: 5px -13px 0 7px;
}

.scale {
  width: 1324px;
  height: 16px;
  margin: 0 auto;
}

.inch {
  font: bold 8px "Noto Sans", sans-serif;
  fill: #333;
  stroke: #fff;
  stroke-width: 3;
  paint-order: stroke;
}

.page {
  flex: 1;
  margin: 0 114px 0 113px;
  padding: 104px;
  display: flex;
  justify-content: space-between;
  background: #fff;
  border: 1px solid #bfc1c2;
  border-bottom: 0;
  box-shadow: 0 0 4px rgba(0, 0, 0, 0.2);
}

.corner {
  width: 23px;
  height: 23px;
  border-bottom: 1px solid #c0c0c0;
}

.corner.left {
  border-right: 1px solid #c0c0c0;
}

.corner.right {
  border-left: 1px solid #c0c0c0;
}

.scrollbar {
  width: 9px;
  height: 273px;
  margin-top: 1px;
  background: #b9bcbe;
}

.splitter {
  width: 6px;
  display: flex;
  align-items: center;
  background: #fff;
  border: 1px solid #bfc2c4;
  border-bottom: 0;
}

.splitter button {
  width: 6px;
  height: 61px;
  flex: none;
  margin-left: -1px;
  background: #222d32;
}

.splitter svg {
  width: 5px;
  height: 8px;
}

.sidebar {
  width: 33px;
  display: flex;
  flex-direction: column;
  align-items: center;
  gap: 2px;
  border-top: 1px solid #bfc2c4;
}

.deck {
  width: 27px;
  height: 27px;
}

.deck svg {
  width: 20px;
  height: 20px;
  margin: auto;
}

.deck.settings {
  height: 31px;
  border-bottom: 1px solid #e6e8e9;
}

.deck.active {
  border: 1px solid #bfc2c4;
  border-radius: 3px;
}

/* status bar */
.statusbar {
  height: 21px;
  flex: none;
  display: grid;
  grid-template-columns: 243px 292px 341px 1fr 273px 63px 118px 26px;
  align-items: center;
  padding: 0 9px;
  background: #fcfcfd;
  border-top: 1px solid #b4b7b9;
  color: #1d2629;
  font-weight: bold;
}

.mode {
  width: 36px;
  height: 10px;
}

.views {
  width: 46px;
  height: 10px;
}

.zoom {
  width: 106px;
  height: 10px;
}

/* desktop panel */
.taskbar {
  height: 25px;
  flex: none;
  display: flex;
  align-items: center;
  background: #373e3f;
  color: #dcdfdf;
  font-weight: 600;
}

.apps {
  width: 51px;
  display: flex;
  align-items: center;
  padding-left: 2px;
  font-size: 11px;
}

.apps svg {
  width: 20px;
  height: 20px;
  flex: none;
}

.task {
  width: 24px;
  height: 25px;
  margin: 0 3px;
}

.task svg {
  width: 20px;
  height: 20px;
  margin: auto;
}

.task.open {
  border: 1px solid #4f5657;
}

.prompt {
  font: bold 7px "DejaVu Sans Mono", monospace;
  fill: #fff;
}

.amz {
  font: bold 13px "Noto Sans", sans-serif;
  fill: #fff;
}

.tray {
  margin-left: auto;
  padding-right: 3px;
  display: flex;
  align-items: center;
  gap: 4px;
}

.tray svg {
  width: 20px;
  height: 20px;
}

.tray .net svg {
  width: 10px;
  height: 10px;
}

.tray .small {
  width: 14px;
  height: 14px;
}

.tray .shield {
  margin-left: 12px;
}

.net {
  display: flex;
  align-items: center;
  gap: 1px;
  font-size: 11px;
}

time {
  white-space: pre;
}

/* options dialog */
.dialog-layer {
  position: absolute;
  inset: 0;
  display: flex;
  justify-content: center;
  align-items: flex-start;
  padding-top: 154px;
}

.dialog {
  position: relative;
  width: 674px;
  background: #fafbfd;
  box-shadow: 0 1px 7px 2px rgba(0, 0, 0, 0.65);
}

.dialog h2 {
  height: 22px;
  margin: 0;
  background: #222d32;
  color: #d5d9da;
  font-size: 10px;
  font-weight: 600;
  line-height: 22px;
  text-align: center;
}

.dialog-main {
  display: flex;
  gap: 10px;
  padding: 7px 6px 0;
}

.tree {
  width: 164px;
  height: 490px;
  padding: 0 0 148px 22px;
  display: flex;
  flex-direction: column;
  justify-content: space-between;
  background: #fff;
  border: 1px solid #e6e8e9;
}

.child {
  padding-left: 16px;
}

.closed {
  display: flex;
  align-items: center;
  margin-left: -16px;
}

.closed::before {
  content: "";
  margin-right: 11px;
  border: 4px solid transparent;
  border-left: 5px solid #7b8284;
  border-right: 0;
}

.selected {
  background: #00bcd4;
  color: #fff;
}

.settings-form {
  flex: 1;
  padding-top: 2px;
}

.settings-form h3 {
  height: 20px;
  margin: 4px 0 0;
  color: #1d2629;
  font-size: 10px;
  line-height: 20px;
}

.settings-form h3:first-child {
  margin-top: 0;
}

.check {
  height: 22px;
  display: flex;
  align-items: center;
  gap: 5px;
  padding: 0 0 1px 11px;
}

.check input {
  appearance: none;
  width: 13px;
  height: 13px;
  background: #fff;
  border: 1px solid #222d32;
  outline: 0;
}

.check input:checked {
  background: #00bcd4;
  border-color: #00bcd4;
}

.check input:checked::after {
  content: "";
  display: block;
  width: 6px;
  height: 3px;
  margin: 2px;
  border-left: 2px solid #fff;
  border-bottom: 2px solid #fff;
  transform: rotate(-45deg);
}

.autosave {
  height: 30px;
  margin: 2px 0;
  display: flex;
  align-items: center;
}

.spin {
  width: 88px;
  height: 30px;
  margin: 0 5px 0 7px;
  display: flex;
  align-items: center;
  border-bottom: 1px solid #cdd0d2;
}

.spin input {
  width: 32px;
  padding-left: 2px;
}

.spin button {
  width: 28px;
}

.spin svg {
  width: 10px;
  height: 10px;
  margin: auto;
}

.field {
  position: relative;
  height: 28px;
  margin-top: 2px;
  display: flex;
  align-items: center;
  padding-left: 10px;
}

.field label {
  width: 104px;
  white-space: nowrap;
}

.field select {
  appearance: none;
  width: 266px;
  height: 28px;
  padding: 0 10px 1px;
  border: 1px solid #e9ebec;
  border-radius: 2px;
  background: #fff;
}

.field::after {
  content: "";
  margin-left: -20px;
  border: 4px solid transparent;
  border-top-color: #222d32;
  border-bottom: 0;
}

.field .focused {
  box-shadow: inset 0 0 0 2px #f6f7f8;
}

.warn {
  margin-top: 4px;
}

.save-as {
  margin-top: 6px;
}

.format-list {
  position: absolute;
  left: 117px;
  top: 25px;
  width: 267px;
  background: #fff;
  border: 1px solid #a9adaf;
}

.format-list li {
  height: 15px;
  padding-left: 1px;
  line-height: 14px;
}

.format-list .current {
  background: #00bcd4;
  color: #fff;
}

.dialog-buttons {
  display: flex;
  gap: 6px;
  padding: 14px 11px 11px;
}

.dialog-buttons button {
  width: 70px;
  height: 26px;
  background: #fff;
  border: 1px solid #e9ebec;
  border-radius: 2px;
}

.help {
  margin-right: auto;
}

.marks {
  position: absolute;
  inset: 0;
  width: 674px;
  height: 570px;
  pointer-events: none;
  fill: none;
  stroke: #f00;
  stroke-width: 3;
  stroke-linejoin: round;
}

.pointer {
  position: absolute;
  left: 527px;
  top: 375px;
  width: 12px;
  height: 19px;
}
```
